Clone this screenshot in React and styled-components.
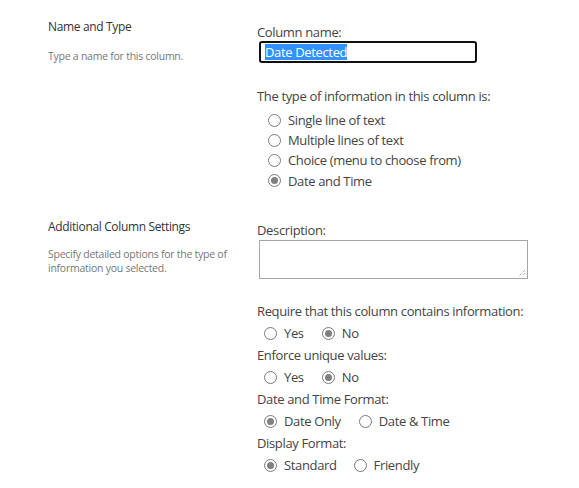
import React from "react";
import styled, { createGlobalStyle } from "styled-components";

const Global = createGlobalStyle`
  html, body { margin: 0; padding: 0; background: #fff; }
  body { font-family: "Open Sans", "Noto Sans", sans-serif; color: #333; }
`;

const Page = styled.div`
  width: 579px;
  height: 488px;
  padding: 0 0 0 48px;
  box-sizing: border-box;
  overflow: hidden;
`;

const Section = styled.section`
  display: grid;
  grid-template-columns: 209px 1fr;
  padding-top: ${(p) => p.$top}px;
`;

const Info = styled.div`
  display: flex;
  flex-direction: column;
  padding-top: ${(p) => p.$top || 0}px;
`;

const InfoTitle = styled.div`
  font-size: 12px;
  line-height: 16px;
  color: #333;
  letter-spacing: -0.35px;
`;

const InfoText = styled.div`
  margin-top: ${(p) => p.$gap}px;
  font-size: 10.5px;
  line-height: 14px;
  color: #777;
  width: 190px;
  letter-spacing: -0.25px;
`;

const Fields = styled.div`
  display: flex;
  flex-direction: column;
  align-items: flex-start;
`;

const Label = styled.div`
  font-size: 13px;
  line-height: ${(p) => p.$lh || 22}px;
  color: #444;
  margin-top: ${(p) => p.$mt || 0}px;
  letter-spacing: -0.35px;
  white-space: nowrap;
`;

const TextBox = styled.div`
  margin-left: 2px;
  width: 218px;
  height: 22px;
  box-sizing: border-box;
  border: 2px solid #111;
  border-radius: 3px;
  display: flex;
  align-items: center;
  padding-left: 4px;
`;

const Selected = styled.span`
  background: #3390ff;
  color: #fff;
  font-size: 13px;
  line-height: 16px;
  letter-spacing: -0.35px;
`;

const TextArea = styled.div`
  position: relative;
  margin-left: 2px;
  margin-top: ${(p) => p.$mt || 0}px;
  width: 269px;
  height: 39px;
  box-sizing: border-box;
  border: 1px solid #a6a6a6;
`;

const Grip = styled.svg`
  position: absolute;
  right: 1px;
  bottom: 1px;
`;

const List = styled.div`
  display: flex;
  flex-direction: column;
  margin-top: ${(p) => p.$mt || 0}px;
  padding-left: ${(p) => p.$indent}px;
`;

const Row = styled.div`
  display: flex;
  align-items: center;
  height: ${(p) => p.$h}px;
  gap: ${(p) => p.$gap || 18}px;
  padding-left: ${(p) => p.$indent || 0}px;
`;

const Option = styled.label`
  display: flex;
  align-items: center;
  gap: 7px;
  font-size: 13px;
  color: #444;
  letter-spacing: -0.35px;
  white-space: nowrap;
`;

const Dot = styled.span`
  width: 13px;
  height: 13px;
  box-sizing: border-box;
  border-radius: 50%;
  border: 1px solid #7a7a7a;
  background: #fff;
  display: flex;
  align-items: center;
  justify-content: center;
  flex: none;
  &::after {
    content: "";
    width: 7px;
    height: 7px;
    border-radius: 50%;
    background: ${(p) => (p.$on ? "#808080" : "transparent")};
  }
`;

const Radio = ({ on, children }) => (
  <Option>
    <Dot $on={on} />
    {children}
  </Option>
);

export default function App() {
  return (
    <Page>
      <Global />
      <Section $top={19}>
        <Info>
          <InfoTitle>Name and Type</InfoTitle>
          <InfoText $gap={14}>Type a name for this column.</InfoText>
        </Info>
        <Fields>
          <Label $lh={18} $mt={4}>Column name:</Label>
          <TextBox>
            <Selected>Date Detected</Selected>
          </TextBox>
          <Label $lh={18} $mt={24}>The type of information in this column is:</Label>
          <List $mt={5} $indent={11}>
            <Row $h={20}><Radio>Single line of text</Radio></Row>
            <Row $h={20}><Radio>Multiple lines of text</Radio></Row>
            <Row $h={20}><Radio>Choice (menu to choose from)</Radio></Row>
            <Row $h={21}><Radio on>Date and Time</Radio></Row>
          </List>
        </Fields>
      </Section>
      <Section $top={27}>
        <Info $top={1}>
          <InfoTitle>Additional Column Settings</InfoTitle>
          <InfoText $gap={12}>Specify detailed options for the type of information you selected.</InfoText>
        </Info>
        <Fields>
          <Label $lh={18} $mt={3}>Description:</Label>
          <TextArea $mt={1}>
            <Grip width="10" height="10" viewBox="0 0 10 10">
              <path d="M9 3 L3 9 M9 6 L6 9" stroke="#888" strokeWidth="1" strokeDasharray="1 1" />
            </Grip>
          </TextArea>
          <Label $mt={21}>Require that this column contains information:</Label>
          <Row $h={22} $indent={7}><Radio>Yes</Radio><Radio on>No</Radio></Row>
          <Label>Enforce unique values:</Label>
          <Row $h={22} $indent={7}><Radio>Yes</Radio><Radio on>No</Radio></Row>
          <Label>Date and Time Format:</Label>
          <Row $h={22} $indent={7}><Radio on>Date Only</Radio><Radio>Date &amp; Time</Radio></Row>
          <Label>Display Format:</Label>
          <Row $h={22} $indent={7} $gap={17}><Radio on>Standard</Radio><Radio>Friendly</Radio></Row>
        </Fields>
      </Section>
    </Page>
  );
}
